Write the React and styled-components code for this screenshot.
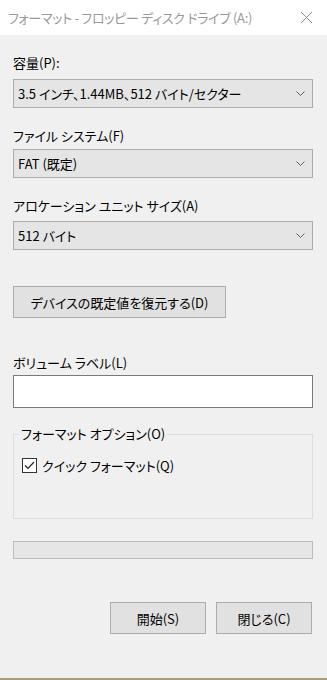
import React from 'react';
import styled, { createGlobalStyle } from 'styled-components';

const GlobalStyle = createGlobalStyle`
    html, body {
        margin: 0;
        padding: 0;
        background: #f0f0f0;
    }
    * {
        box-sizing: border-box;
    }
`

const font = `"Noto Sans CJK JP", "Noto Sans", sans-serif`

const Window = styled.div`
    width: 327px;
    height: 680px;
    display: flex;
    flex-direction: column;
    font-family: ${font};
    font-feature-settings: "palt";
    font-size: 13px;
    color: #000;
    background: #f0f0f0;
    overflow: hidden;
`

const TitleBar = styled.div`
    height: 35px;
    flex: none;
    background: #fff;
    display: flex;
    align-items: center;
    justify-content: space-between;
    padding: 0 14px 0 8px;
    color: #999;
    font-size: 13px;
    letter-spacing: -0.3px;
`

const CloseIcon = styled.svg`
    width: 13px;
    height: 13px;
`

const Body = styled.div`
    flex: 1;
    display: flex;
    flex-direction: column;
    padding: 0 14px 0 13px;
    border-bottom: 2px solid #a59d7c;
`

const Label = styled.div`
    line-height: 16px;
    margin-top: ${p => p.$top}px;
`

const Select = styled.div`
    height: 29px;
    margin-top: ${p => p.$top}px;
    background: #e5e5e5;
    border: 1px solid #adadad;
    display: flex;
    align-items: center;
    justify-content: space-between;
    padding: 0 7px 0 4px;
`

const Chevron = styled.svg`
    width: 9px;
    height: 5px;
`

const Button = styled.div`
    height: 32px;
    width: ${p => p.$width}px;
    margin-top: ${p => p.$top || 0}px;
    background: #e1e1e1;
    border: 1px solid #adadad;
    display: flex;
    align-items: center;
    justify-content: center;
    flex: none;
`

const TextInput = styled.div`
    height: 33px;
    margin-top: 4px;
    background: #fff;
    border: 1px solid #7a7a7a;
`

const Group = styled.fieldset`
    margin: 18px 0 0;
    height: 93px;
    border: 1px solid #dcdcdc;
    padding: 0 8px 0 5px;
`

const Legend = styled.legend`
    padding: 0 2px;
    line-height: 16px;
`

const CheckRow = styled.div`
    display: flex;
    align-items: center;
    gap: 5px;
    margin-top: 14px;
    padding-left: 3px;
`

const CheckBox = styled.div`
    width: 15px;
    height: 15px;
    border: 1px solid #333;
    background: #fff;
    display: flex;
    align-items: center;
    justify-content: center;
`

const Progress = styled.div`
    height: 18px;
    margin-top: 22px;
    background: #e6e6e6;
    border: 1px solid #bcbcbc;
`

const Footer = styled.div`
    display: flex;
    justify-content: flex-end;
    gap: 10px;
    margin-top: 43px;
    padding-right: 1px;
`

function Dropdown({ top, children }) {
    return (
        <Select $top={top}>
            <span>{children}</span>
            <Chevron viewBox="0 0 9 5">
                <path d="M0.5 0.5 L4.5 4.5 L8.5 0.5" fill="none" stroke="#606060" strokeWidth="1" />
            </Chevron>
        </Select>
    )
}

export default function App() {
    return (
        <Window>
            <GlobalStyle />
            <TitleBar>
                <span>フォーマット - フロッピー ディスク ドライブ (A:)</span>
                <CloseIcon viewBox="0 0 13 13">
                    <path d="M1 1 L12 12 M12 1 L1 12" stroke="#8a8a8a" strokeWidth="1" />
                </CloseIcon>
            </TitleBar>
            <Body>
                <Label $top={20}>容量(P):</Label>
                <Dropdown top={8}>3.5 インチ、1.44MB、512 バイト/セクター</Dropdown>
                <Label $top={20}>ファイル システム(F)</Label>
                <Dropdown top={5}>FAT (既定)</Dropdown>
                <Label $top={20}>アロケーション ユニット サイズ(A)</Label>
                <Dropdown top={7}>512 バイト</Dropdown>
                <Button $width={213} $top={36}>デバイスの既定値を復元する(D)</Button>
                <Label $top={37}>ボリューム ラベル(L)</Label>
                <TextInput />
                <Group>
                    <Legend>フォーマット オプション(O)</Legend>
                    <CheckRow>
                        <CheckBox>
                            <svg width="11" height="9" viewBox="0 0 11 9">
                                <path d="M1 4.5 L4 7.5 L10 1" fill="none" stroke="#222" strokeWidth="1.2" />
                            </svg>
                        </CheckBox>
                        <span>クイック フォーマット(Q)</span>
                    </CheckRow>
                </Group>
                <Progress />
                <Footer>
                    <Button $width={96}>開始(S)</Button>
                    <Button $width={96}>閉じる(C)</Button>
                </Footer>
            </Body>
        </Window>
    )
}
